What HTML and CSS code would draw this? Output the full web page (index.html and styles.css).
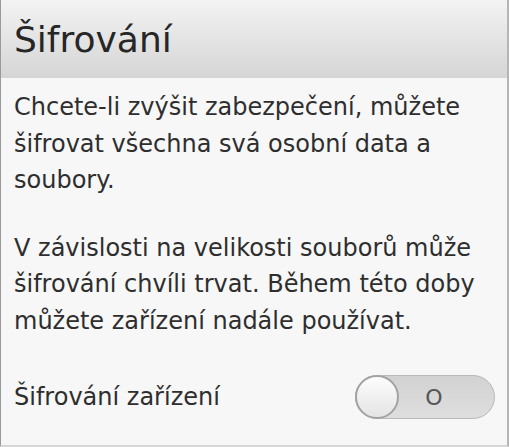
FILE: index.html
```html
<!DOCTYPE html>
<html lang="cs">
<head>
    <meta charset="UTF-8">
    <meta name="viewport" content="width=device-width, initial-scale=1.0">
    <title>Šifrování</title>
    <link rel="stylesheet" href="styles.css">
</head>
<body>
    <div class="screen">
        <!-- Title bar -->
        <div class="title-bar">
            <h1>Šifrování</h1>
        </div>

        <div class="content">
            <p>Chcete-li zvýšit zabezpečení, můžete šifrovat všechna svá osobní data a soubory.</p>
            <p>V závislosti na velikosti souborů může šifrování chvíli trvat. Během této doby můžete zařízení nadále používat.</p>

            <!-- Toggle row -->
            <div class="setting-row">
                <span class="setting-label">Šifrování zařízení</span>
                <div class="toggle">
                    <div class="toggle-knob"></div>
                    <span class="toggle-text">O</span>
                </div>
            </div>
        </div>
    </div>
</body>
</html>
```

FILE: styles.css
```css
/* General Layout */
html, body {
    margin: 0;
    padding: 0;
}

body {
    font-family: 'DejaVu Sans', sans-serif;
    color: #2e2e2e;
    background-color: #f7f7f7;
}

.screen {
    width: 509px;
    height: 447px;
    box-sizing: border-box;
    border-left: 1px solid #9a9a9a;
    border-right: 2px solid #b5b5b5;
    border-bottom: 2px solid #d6d6d6;
    background-color: #f7f7f7;
    overflow: hidden;
}

/* Title Bar */
.title-bar {
    height: 78px;
    background: linear-gradient(to bottom, #f3f3f3, #d5d5d5);
    display: flex;
    align-items: center;
    padding-left: 13px;
}

.title-bar h1 {
    margin: 0;
    font-size: 36px;
    font-weight: normal;
    color: #262626;
}

/* Content */
.content {
    padding: 11px 12px 0 13px;
}

.content p {
    margin: 0 0 31px 0;
    font-size: 24px;
    line-height: 36.5px;
}

/* Setting Row */
.setting-row {
    display: flex;
    align-items: center;
    justify-content: space-between;
    margin-top: 36px;
}

.setting-label {
    font-size: 24px;
}

.toggle {
    position: relative;
    width: 140px;
    height: 44px;
    box-sizing: border-box;
    border: 1px solid #b9b9b9;
    border-radius: 22px;
    background: linear-gradient(to bottom, #d2d2d2, #dedede);
    display: flex;
    align-items: center;
    justify-content: center;
}

.toggle-knob {
    position: absolute;
    left: -1px;
    top: -1px;
    width: 44px;
    height: 44px;
    box-sizing: border-box;
    border-radius: 50%;
    border: 2px solid #a3a3a3;
    background: linear-gradient(to bottom, #fdfdfd, #e4e4e4);
}

.toggle-text {
    font-size: 22px;
    color: #555;
    padding-left: 18px;
}
```
